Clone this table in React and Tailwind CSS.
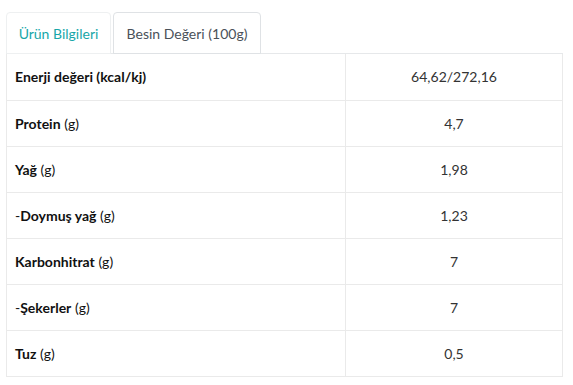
import React from 'react';

const rows = [
  { pre: '', label: 'Enerji değeri (kcal/kj)', unit: '', value: '64,62/272,16' },
  { pre: '', label: 'Protein', unit: ' (g)', value: '4,7' },
  { pre: '', label: 'Yağ', unit: ' (g)', value: '1,98' },
  { pre: '-', label: 'Doymuş yağ', unit: ' (g)', value: '1,23' },
  { pre: '', label: 'Karbonhitrat', unit: ' (g)', value: '7' },
  { pre: '-', label: 'Şekerler', unit: ' (g)', value: '7' },
  { pre: '', label: 'Tuz', unit: ' (g)', value: '0,5' },
];

export default function App() {
  return (
    <div className="w-[573px] h-[385px] bg-white pl-[6px] pr-[10px] pt-[12px] font-['Lato',sans-serif]">
      <div className="flex gap-[2px] border-b border-[#e6e8ea]">
        <div className="w-[105px] h-[42px] -mb-px flex items-center justify-center rounded-t-[4px] border border-[#eef0f1] text-[14px] text-[#17a6a8]">
          Ürün Bilgileri
        </div>
        <div className="w-[148px] h-[42px] -mb-px flex items-center justify-center rounded-t-[4px] border border-[#dfe2e5] text-[14px] text-[#4a5159]">
          Besin Değeri (100g)
        </div>
      </div>
      <table className="w-full border-collapse border border-[#eaeaea] border-t-0 text-[14px] text-[#111]">
        <tbody>
          {rows.map((r) => (
            <tr key={r.label} className="h-[46px] border-b border-[#eaeaea]">
              <td className="w-[339px] pl-[8px] border-r border-[#eaeaea]">
                {r.pre && <span className="font-normal">{r.pre}</span>}
                <span className="font-bold">{r.label}</span>
                {r.unit && <span className="font-normal">{r.unit}</span>}
              </td>
              <td className="text-center text-[#333]">{r.value}</td>
            </tr>
          ))}
        </tbody>
      </table>
    </div>
  );
}
